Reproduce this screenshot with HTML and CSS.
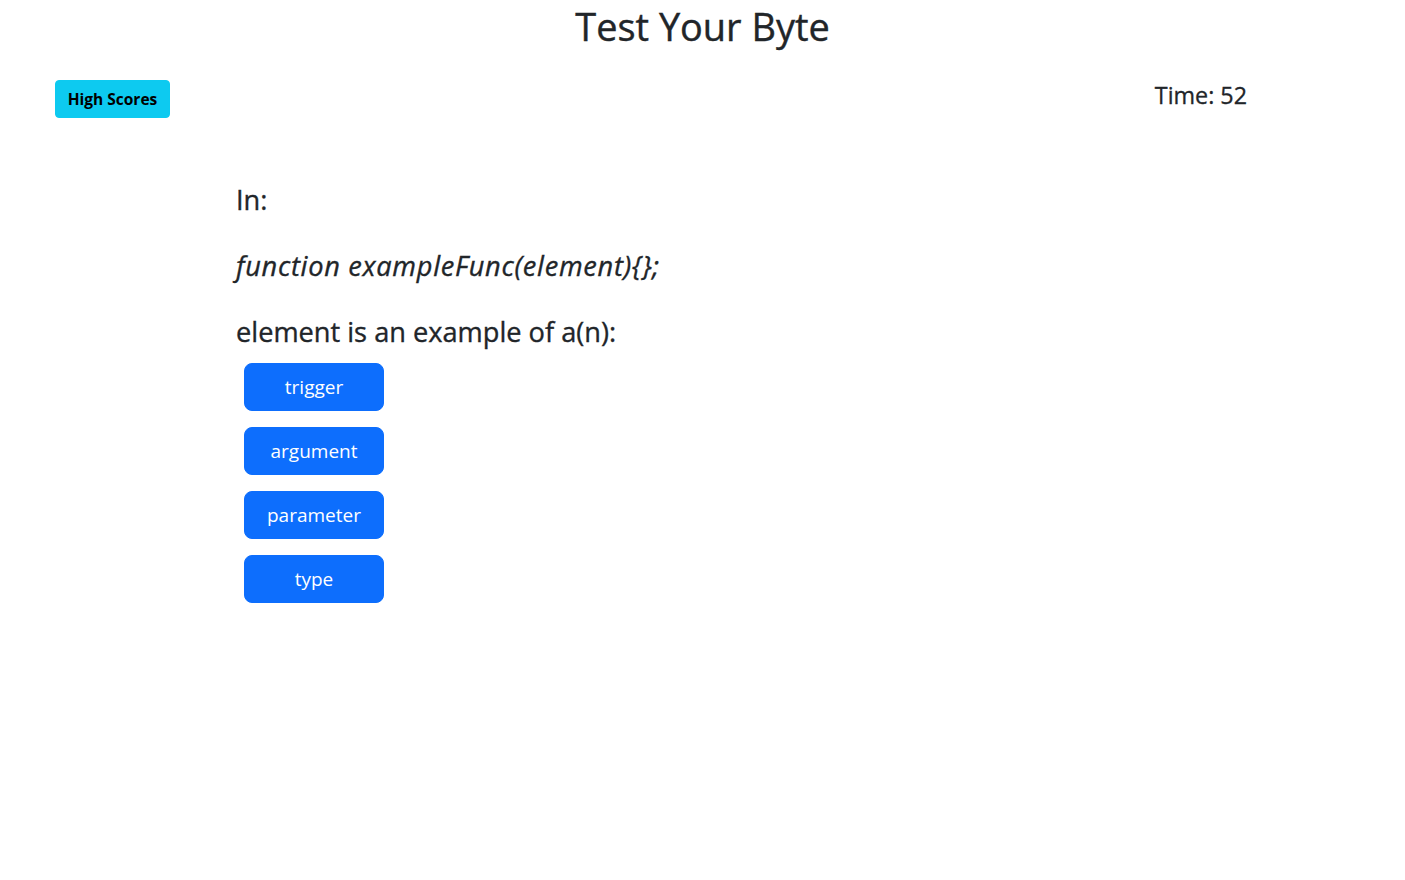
FILE: index.html
```html
<!DOCTYPE html>
<html lang="en">
<head>
<meta charset="utf-8">
<title>Test Your Byte</title>
<link rel="stylesheet" href="styles.css">
</head>
<body>
<header class="header">
  <h1 class="title">Test Your Byte</h1>
</header>
<div class="topbar">
  <button class="btn-info">High Scores</button>
  <div class="timer">Time: 52</div>
</div>
<main class="quiz">
  <h3 class="q-line">In:</h3>
  <h3 class="q-line q-code">function exampleFunc(element){};</h3>
  <h3 class="q-line q-last">element is an example of a(n):</h3>
  <div class="answers">
    <button class="answer">trigger</button>
    <button class="answer">argument</button>
    <button class="answer">parameter</button>
    <button class="answer">type</button>
  </div>
</main>
</body>
</html>
```
FILE: styles.css
```css
* { box-sizing: border-box; }
body {
  margin: 0;
  font-family: "Open Sans", "Noto Sans", sans-serif;
  color: #212529;
  background: #fff;
}
.header { display: flex; justify-content: center; }
.title {
  margin: 0;
  font-size: 37.9px;
  font-weight: 500;
  line-height: 52px;
  -webkit-text-stroke: 0.4px #212529;
}
.topbar {
  display: flex;
  justify-content: space-between;
  align-items: flex-start;
  padding: 28px 158px 0 55px;
}
.btn-info {
  background: #0dcaf0;
  border: 1px solid #0dcaf0;
  border-radius: 4px;
  color: #000;
  font-family: inherit;
  font-weight: 700;
  font-size: 15.5px;
  height: 38px;
  width: 115px;
  padding: 0;
}
.timer {
  font-size: 23.3px;
  font-weight: 500;
  line-height: 30px;
  -webkit-text-stroke: 0.3px #212529;
}
.quiz {
  padding: 65px 0 0 236px;
}
.q-line {
  margin: 0 0 32px;
  font-size: 27.2px;
  font-weight: 500;
  line-height: 34px;
  -webkit-text-stroke: 0.35px #212529;
}
.q-last { margin-bottom: 14px; }
.q-code { font-style: italic; letter-spacing: 0.7px; }
.answers {
  display: flex;
  flex-direction: column;
  gap: 16px;
  margin-left: 8px;
}
.answer {
  width: 140px;
  height: 48px;
  background: #0d6efd;
  border: 1px solid #0d6efd;
  border-radius: 8px;
  color: #fff;
  font-family: inherit;
  font-size: 19px;
  padding: 0;
}
```
